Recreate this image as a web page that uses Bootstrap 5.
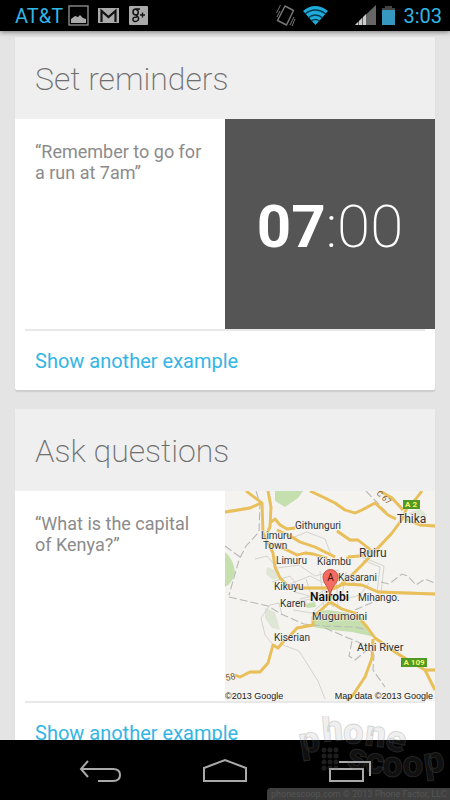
<!DOCTYPE html>
<html lang="en">
<head>
<meta charset="utf-8">
<meta name="viewport" content="width=device-width, initial-scale=1">
<title>Voice search examples</title>
<link href="https://cdn.jsdelivr.net/npm/bootstrap@5.3.0/dist/css/bootstrap.min.css" rel="stylesheet">
<style>
  body { font-family: Roboto, "Noto Sans", sans-serif; background: #e4e4e4; }
  svg text { font-family: Roboto, "Noto Sans", sans-serif; }
  .status { height: 31px; background: #000; color: #33b5e5; font-size: 20px; line-height: 24px; padding: 1px 8px 0 15px; box-shadow: 0 1px 5px rgba(0,0,0,.5); z-index: 2; }
  .feed { padding: 6px 15px 0; gap: 19px; min-height: 0; }
  .example { border: 0; border-radius: 2px; box-shadow: 0 2px 1px #cdcdcd; flex-shrink: 0; }
  .example-title { background: #efefef; color: #6e6e6e; font-size: 32px; font-weight: 200; line-height: 40px; padding: 22px 20px 20px; }
  .phrase { color: #8b8b8b; font-size: 18px; line-height: 21px; padding: 22px 16px 0 20px; }
  .clock { background: #555; color: #fff; font-size: 60px; font-weight: 200; line-height: 60px; padding-top: 6px; }
  .more-wrap { margin: 0 10px; border-top: 2px solid #e8e8e8; }
  .more { color: #33b5e5; font-size: 20px; line-height: 24px; padding: 18px 10px 17px; text-align: left; }
  .navkeys { height: 60px; background: #000; z-index: 2; padding: 4px 37px 0; }
  .stamp { right: 0; bottom: 0; z-index: 3; pointer-events: none; }
  .map-credit { font-family: "Liberation Sans", Arial, sans-serif; }
</style>
<script src="https://cdn.jsdelivr.net/npm/bootstrap@5.3.0/dist/js/bootstrap.bundle.min.js"></script>
</head>
<body class="vh-100 d-flex flex-column overflow-hidden position-relative">

<header class="status d-flex align-items-center position-relative flex-shrink-0">
  <span>AT&amp;T</span>
  <svg class="ms-1" width="84" height="24" viewBox="66 4 84 24" aria-hidden="true">
    <rect x="68" y="6" width="19" height="19" fill="none" stroke="#969696" stroke-width="1.3"/>
    <path d="M70 23v-4l4-3 3 1 2-2 3 3 3 1v4z" fill="#aaa"/>
    <rect x="97" y="8" width="21" height="15" fill="#aaa"/>
    <path d="M100.500 22V11l7 6 7-6v11" fill="none" stroke="#111" stroke-width="2.200"/>
    <rect x="128" y="6" width="19" height="19" rx="1" fill="#aaa"/>
    <path d="M139 9h-4c-4 0-4 6 0 6 3 0 3-6 0-5M135 15l2 2c3 5-6 6-5 2 0-2 2-2 4-2" fill="none" stroke="#111" stroke-width="1.500"/>
    <path d="M139 15h5M141.500 12.500v5" stroke="#111" stroke-width="1.300"/>
  </svg>
  <svg class="ms-auto me-2" width="122" height="26" viewBox="273 3 122 26" aria-hidden="true">
    <path d="M285 6l8.500 4.500-7 14.500-9-4.500z" fill="none" stroke="#777" stroke-width="1.500" stroke-linejoin="round"/>
    <path d="M276.500 13l4-8M277 17l3-6M290 25l4-8M292 26l3-7" stroke="#777" stroke-width="1"/>
    <path d="M303 11q12-10 25 0L315.500 25z" fill="#1eabdc"/>
    <path d="M305 14q10-8 21 0M308 18q7-6 15 0M311 21q4-3 9 0" fill="none" stroke="#063b4c" stroke-width="1.300"/>
    <path d="M355 25L376 5v20z" fill="#666"/>
    <path d="M355 25l3-3v3zM359 25v-4l3-3v7zM363 25v-8l3-3v11z" fill="#ccc"/>
    <path d="M382 8h3V6h7v2h3v4h-13z" fill="#444"/>
    <path d="M382 10h13v15h-13z" fill="#3698c0"/>
  </svg>
  <time>3:03</time>
</header>

<main class="feed flex-fill d-flex flex-column overflow-hidden">
  <section class="card example">
    <h1 class="example-title mb-0">Set reminders</h1>
    <div class="row g-0">
      <p class="col-6 phrase mb-0">“Remember to go for a run at 7am”</p>
      <div class="col-6"><div class="ratio ratio-1x1"><div class="clock d-flex align-items-center justify-content-center"><span class="fw-bold">07</span>:00</div></div></div>
    </div>
    <div class="more-wrap"><button type="button" class="more btn border-0 w-100">Show another example</button></div>
  </section>

  <section class="card example">
    <h2 class="example-title mb-0">Ask questions</h2>
    <div class="row g-0">
      <p class="col-6 phrase mb-0">“What is the capital of Kenya?”</p>
      <div class="col-6">
        <svg class="d-block w-100" viewBox="0 0 210 210" role="img" aria-label="Map of Nairobi">
          <rect width="210" height="210" fill="#f4f3f0"/>
          <g fill="#c5dfae">
            <path d="M50 0h28l-5 7-13 9-10-6z"/>
            <path d="M0 61q9 8 10 20Q8 92 0 96z"/>
            <path d="M90 121l13-2 20 3 14 9 13 15-23-5-20-2-19-3zM80 113l10-2 1 5-9 1z"/>
          </g>
          <path d="M42 76l8 3 3 8-5 2-7-6zM40 117l10 4 5 18-8-2-7-10zM183 22l12-4 7 6-9 4z" fill="#dfe6d6"/>
          <g fill="none" stroke="#d3d3cf" stroke-width="1">
            <path d="M67 47l15-6 18 7 7 18M30 68l12-3 10 12 22-3 16 11 24-6M47 91l18-6 10 13M36 127l9-13 9-2 3 12M36 127l4 17 10 12M58 154l16 6 19 30 7 18M137 66l22 9-3 28M138 69l17 7-3 26"/>
            <path d="M65 93l20-8 14 7 17-9 15 10M70 101l18 5 12-7 17 10 18-5 9-12M75 108l16-4 18 12M81 88l8 24M95 80l4 39M111 82l2 36M121 81l-5 31M62 112l31-5 16-13M68 119l19 3 14-13"/>
          </g>
          <g fill="none" stroke="#b8b8b8" stroke-dasharray="8 3" stroke-width="1.100">
            <path d="M31 0l4 12-1 29-13 14-7 14-10 35M0 55l15 11M4 106l39 9 13 8 23 10 20 2 30 1 10 2M156 91l8 2 13-10 6 2 8 9 9-6 10 4M100 137l28 12 12 5 9 10-1 15 12 17M127 150l-3 15 6 4 12-10M130 119l23-10 4-8M141 0l26 27"/>
          </g>
          <g id="roads" fill="none" stroke="#e9bf5a" stroke-width="2.800" stroke-linejoin="round">
            <path d="M0 21l13-2 12-2 11-5M21 0l16 12 1 30 10 20 2 14 5 11 8 8 9 2h31M43 0l3 16-1 20-3 6M45 32l5-4 5 6 7 4 8-1M52 39l15 7 8 5 15 5 20 10M44 52l18 7 10 5 8-2 8 1 14 4"/>
            <path d="M85 0l15 7 10 5 10 7 10 3 7-3 13-7 13 12 8 4M155 0l12 7 11 12M112 40l13 9h8l14 11M123 66l12-1 12-5M123 66l-2 7"/>
            <path d="M197 0l-7 9-8 7-4 11-11 15-14 15-16 17-10 10-14 12-8 3M180 28l15 6 15 1M107 97l13-4 17 1 16 7 57 2"/>
            <path d="M105 97v14l12 7 13 4 12 14 8 11 20 14 13 8 17 10 10 20M200 179h10M148 148l-1 19-7 19-12 18-6 6"/>
            <path d="M105 111l-17 15v8l-16 3-9 10-5 4-5 6-5-3-5 18-8 9H25l-10 5-5-2"/>
          </g>
          <use href="#roads" opacity=".35"/>
          <g fill="#333" stroke="#f4f3f0" stroke-width="1" paint-order="stroke" font-size="10">
            <text x="70" y="38">Githunguri</text>
            <text x="36" y="48">Limuru</text><text x="38" y="58">Town</text>
            <text x="51" y="73">Limuru</text><text x="92" y="74">Kiambu</text>
            <text x="49" y="99">Kikuyu</text><text x="113" y="90">Kasarani</text>
            <text x="55" y="116">Karen</text><text x="133" y="110">Mihango.</text>
            <text x="49" y="150">Kiserian</text>
            <text x="134" y="66" font-size="12">Ruiru</text>
            <text x="172" y="32" font-size="12">Thika</text>
            <text x="87" y="129" font-size="11">Mugumoini</text>
            <text x="132" y="160" font-size="11">Athi River</text>
            <text x="85" y="110" font-size="12" font-weight="600" fill="#111">Nairobi</text>
          </g>
          <g font-size="8" font-weight="700" text-anchor="middle">
            <rect x="178" y="9" width="17" height="9" fill="#4d9a24"/><text x="186" y="16" fill="#fff36b">A 2</text>
            <rect x="176" y="167" width="26" height="9" fill="#4d9a24"/><text x="189" y="174" fill="#fff36b">A 109</text>
          </g>
          <text x="1" y="190" font-size="9" fill="#7d571d" transform="rotate(-12 1 190)">58</text>
          <text x="151" y="3" font-size="8" fill="#7d571d" transform="rotate(42 151 3)">C 67</text>
          <path d="M105 105C104 95 98 93 98 86a7.500 7.500 0 0 1 15 0C113 93 106 95 105 105z" fill="#f36b61" stroke="#c4534b"/>
          <text x="105.500" y="90" font-size="10" text-anchor="middle" fill="#42100d">A</text>
          <g class="map-credit" fill="#222" font-size="9">
            <text class="map-credit" x="0" y="208">©2013 Google</text><text class="map-credit" x="208" y="208" text-anchor="end">Map data ©2013 Google</text>
          </g>
        </svg>
      </div>
    </div>
    <div class="more-wrap"><button type="button" class="more btn border-0 w-100">Show another example</button></div>
  </section>
</main>

<nav class="navkeys d-flex align-items-center justify-content-around position-relative flex-shrink-0" aria-label="System keys">
  <button type="button" class="btn border-0 p-0" aria-label="Back"><svg class="d-block" width="46" height="30" viewBox="77 757 46 30" fill="none" stroke="#aaa" stroke-width="2"><path d="M88 761l-7 8 7 8M81 769h32q7 0 7 6t-7 6H98"/></svg></button>
  <button type="button" class="btn border-0 p-0" aria-label="Home"><svg class="d-block" width="46" height="30" viewBox="202 757 46 30" fill="none" stroke="#aaa" stroke-width="2"><path d="M204 781v-13l21-8 21 8v13z"/></svg></button>
  <button type="button" class="btn border-0 p-0" aria-label="Recent apps"><svg class="d-block" width="46" height="30" viewBox="328 757 46 30" fill="none" stroke="#aaa" stroke-width="2"><path d="M331 769h33v12h-33zM340 762h31v14"/></svg></button>
</nav>

<svg class="stamp position-absolute" width="184" height="84" viewBox="266 716 184 84" aria-hidden="true">
  <g font-size="37" font-weight="900" fill="#808080" fill-opacity=".14" stroke="#777" stroke-opacity=".25">
    <text x="301 323 343 364 384" y="754 742 744 745 749" rotate="-10 -5 0 7 12">phone</text>
    <text x="346 364 382 403 425" y="767 772 777 777 774" rotate="12 7 0 -3 -8">scoop</text>
    <path fill="none" d="M324 750h18M324 756h18M324 762h18M324 768h18" stroke-width="5" stroke-linecap="round" stroke-dasharray="0 6"/>
  </g>
  <path d="M267 800v-8q0-4 4-4h179v12z" fill="#404040"/>
  <text x="271" y="797" font-size="9" fill="#555">phonescoop.com   © 2013 Phone Factor, LLC</text>
</svg>
</body>
</html>
